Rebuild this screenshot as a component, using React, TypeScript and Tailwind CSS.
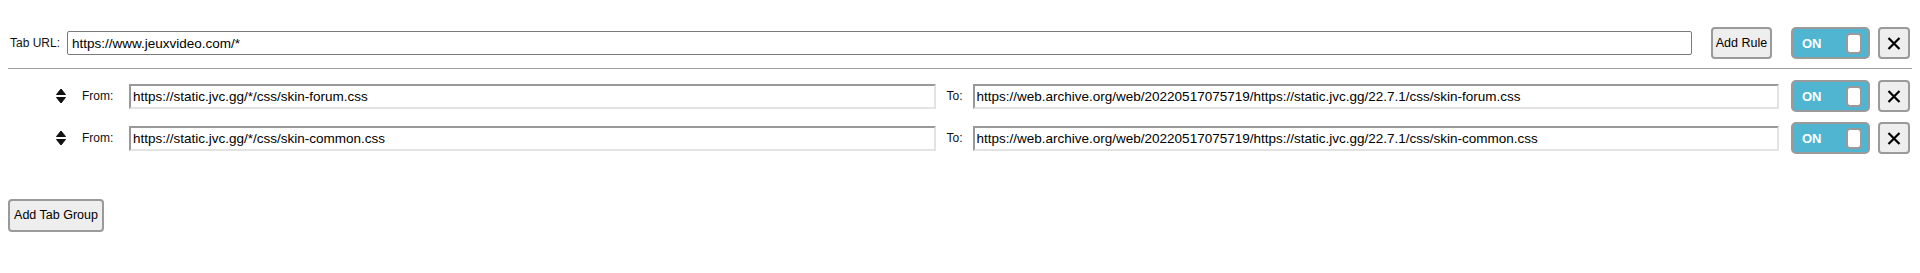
import React from "react";

function Toggle() {
  return (
    <div className="flex items-center justify-between w-[79px] h-[32px] shrink-0 rounded-[5px] border-2 border-[#9a9a9a] bg-[#50b5d0] pl-[9px] pr-[6px]">
      <span className="text-white font-bold text-[13px] leading-none">ON</span>
      <span className="block w-[16px] h-[21px] rounded-[4px] border-2 border-[#9a9a9a] bg-white" />
    </div>
  );
}

function CloseBtn() {
  return (
    <button className="flex items-center justify-center w-[32px] h-[32px] shrink-0 ml-[8px] rounded-[4px] border-2 border-[#9a9a9a] bg-[#eeeeee]">
      <svg width="14" height="13" viewBox="0 0 14 13">
        <path d="M1.5 1 L12.5 12 M12.5 1 L1.5 12" stroke="#000" strokeWidth="2.2" strokeLinecap="butt" />
      </svg>
    </button>
  );
}

function SortIcon() {
  return (
    <svg width="10" height="16" viewBox="0 0 10 16" className="shrink-0">
      <path d="M5 1 L9.5 6.5 L0.5 6.5 Z" fill="#111" strokeLinejoin="round" stroke="#111" strokeWidth="1" />
      <path d="M5 15 L9.5 9.5 L0.5 9.5 Z" fill="#111" strokeLinejoin="round" stroke="#111" strokeWidth="1" />
    </svg>
  );
}

const insetInput =
  "flex-1 min-w-0 h-[25px] bg-white border-2 border-t-[#999999] border-l-[#999999] border-b-[#e3e3e3] border-r-[#e3e3e3] px-[2px] text-[13.5px] text-black outline-none";

function RuleRow({ from, to }: { from: string; to: string }) {
  return (
    <div className="flex items-center h-[32px] pr-[2px]">
      <div className="ml-[48px] w-[26px] flex items-center">
        <SortIcon />
      </div>
      <span className="w-[47px] text-[12px] text-[#111]">From:</span>
      <input className={insetInput} value={from} readOnly />
      <span className="ml-[11px] w-[26px] text-[12px] text-[#111]">To:</span>
      <input className={insetInput} value={to} readOnly />
      <div className="ml-[12px]">
        <Toggle />
      </div>
      <CloseBtn />
    </div>
  );
}

export default function App() {
  return (
    <div
      className="w-[1920px] h-[273px] bg-white px-[8px] pt-[27px]"
      style={{ fontFamily: '"Liberation Sans", Arial, sans-serif' }}
    >
      <div className="flex items-center h-[32px] pr-[2px]">
        <span className="ml-[2px] text-[12px] text-[#111] w-[57px]">Tab URL:</span>
        <input
          className="flex-1 min-w-0 h-[24px] bg-white border border-[#7a7a7a] rounded-[2px] px-[4px] text-[13.5px] text-black outline-none"
          value="https://www.jeuxvideo.com/*"
          readOnly
        />
        <button className="ml-[19px] w-[61px] h-[32px] shrink-0 rounded-[4px] border-2 border-[#9a9a9a] bg-[#eeeeee] text-[12.5px] text-black">
          Add Rule
        </button>
        <div className="ml-[19px]">
          <Toggle />
        </div>
        <CloseBtn />
      </div>
      <div className="mt-[9px] h-px bg-[#a0a0a0]" />
      <div className="mt-[11px] flex flex-col gap-[10px]">
        <RuleRow
          from="https://static.jvc.gg/*/css/skin-forum.css"
          to="https://web.archive.org/web/20220517075719/https://static.jvc.gg/22.7.1/css/skin-forum.css"
        />
        <RuleRow
          from="https://static.jvc.gg/*/css/skin-common.css"
          to="https://web.archive.org/web/20220517075719/https://static.jvc.gg/22.7.1/css/skin-common.css"
        />
      </div>
      <button className="mt-[45px] w-[96px] h-[33px] rounded-[4px] border-2 border-[#9a9a9a] bg-[#eeeeee] text-[12.5px] text-black">
        Add Tab Group
      </button>
    </div>
  );
}
